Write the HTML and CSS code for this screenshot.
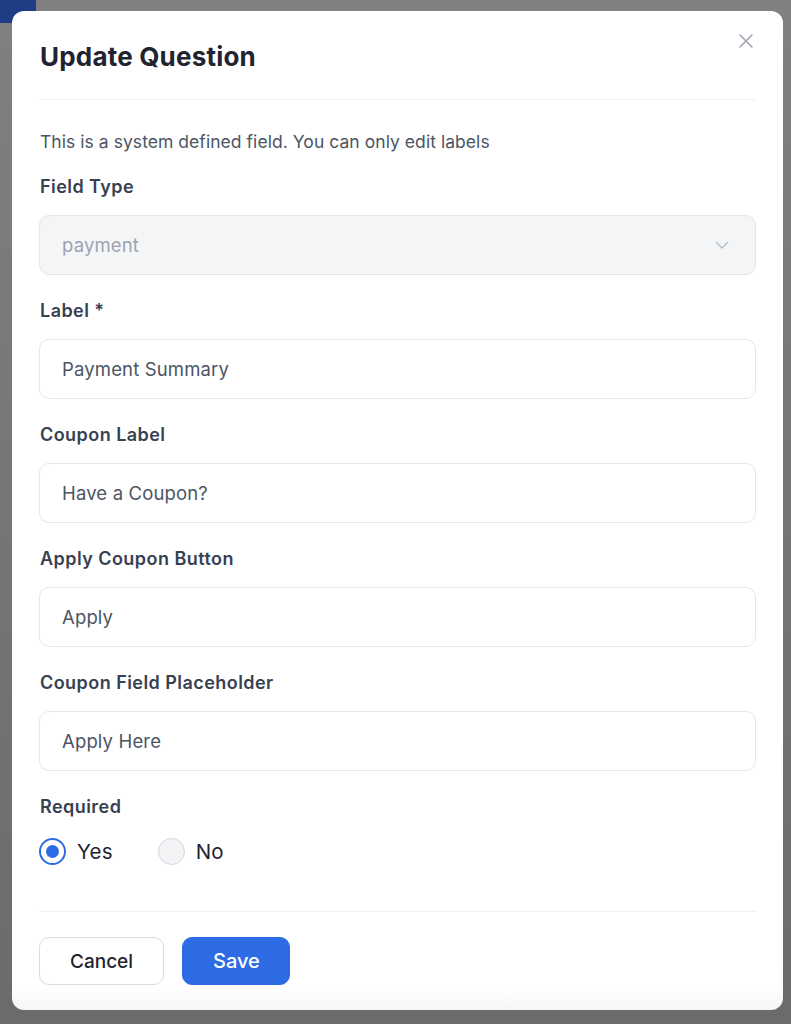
FILE: index.html
```html
<!DOCTYPE html>
<html lang="en">
<head>
<meta charset="utf-8">
<title>Update Question</title>
<link rel="stylesheet" href="styles.css">
</head>
<body>
<div class="backdrop">
  <div class="page-tab"></div>
  <div class="modal">
    <div class="modal-header">
      <h2 class="modal-title">Update Question</h2>
      <button class="close-btn" aria-label="Close">
        <svg viewBox="0 0 18 18" width="18" height="18"><path d="M3 3 L15 15 M15 3 L3 15" stroke="#9ca3af" stroke-width="1.5" stroke-linecap="round" fill="none"/></svg>
      </button>
    </div>
    <div class="modal-body">
      <p class="note">This is a system defined field. You can only edit labels</p>
      <div class="group">
        <label class="label">Field Type</label>
        <div class="select">
          <span class="select-text">payment</span>
          <svg viewBox="0 0 16 16" width="16" height="16"><path d="M2.5 5.5 L8 11 L13.5 5.5" stroke="#b5bac2" stroke-width="1.4" fill="none" stroke-linecap="round" stroke-linejoin="round"/></svg>
        </div>
      </div>
      <div class="group">
        <label class="label">Label *</label>
        <div class="input">Payment Summary</div>
      </div>
      <div class="group">
        <label class="label">Coupon Label</label>
        <div class="input">Have a Coupon?</div>
      </div>
      <div class="group">
        <label class="label">Apply Coupon Button</label>
        <div class="input">Apply</div>
      </div>
      <div class="group">
        <label class="label">Coupon Field Placeholder</label>
        <div class="input">Apply Here</div>
      </div>
      <div class="group">
        <label class="label">Required</label>
        <div class="radios">
          <div class="radio-item">
            <span class="radio checked"><span class="dot"></span></span>
            <span class="radio-text">Yes</span>
          </div>
          <div class="radio-item">
            <span class="radio"></span>
            <span class="radio-text">No</span>
          </div>
        </div>
      </div>
    </div>
    <div class="modal-footer">
      <button class="btn btn-cancel">Cancel</button>
      <button class="btn btn-save">Save</button>
    </div>
  </div>
</div>
</body>
</html>
```
FILE: styles.css
```css
* { box-sizing: border-box; }
html, body { margin: 0; padding: 0; }
body {
  font-family: Inter, "Noto Sans", "Liberation Sans", sans-serif;
  background: linear-gradient(#808080, #6b6b6b);
  width: 791px;
  height: 1024px;
  overflow: hidden;
}
.backdrop {
  position: relative;
  padding: 11px 8px 14px 12px;
  height: 1024px;
}
.page-tab {
  position: absolute;
  left: 0;
  top: 0;
  width: 36px;
  height: 23px;
  background: #1e3d84;
}
.modal {
  position: relative;
  width: 771px;
  height: 999px;
  border-radius: 12px;
  padding: 0 27px;
  display: flex;
  flex-direction: column;
  background: linear-gradient(#ffffff 975px, #f6f6f6 999px);
}
.modal-header {
  display: flex;
  justify-content: space-between;
  align-items: flex-start;
  padding: 28px 0 24px 1px;
  border-bottom: 1px solid #f0f0f2;
}
.modal-title {
  margin: 0;
  font-size: 26px;
  line-height: 36px;
  font-weight: 700;
  color: #1f2430;
  letter-spacing: 0.2px;
}
.close-btn {
  border: 0;
  background: none;
  padding: 0;
  width: 18px;
  height: 18px;
  margin-top: -7px;
  margin-right: 1px;
  display: flex;
}
.modal-body {
  padding-top: 30px;
  display: flex;
  flex-direction: column;
  gap: 24px;
}
.note {
  margin: 0 0 -3px 1px;
  font-size: 17.5px;
  line-height: 24px;
  color: #4b5563;
  letter-spacing: 0.05px;
}
.group {
  display: flex;
  flex-direction: column;
  gap: 16px;
}
.label {
  font-size: 18px;
  line-height: 24px;
  font-weight: 600;
  color: #374151;
  margin-left: 1px;
  letter-spacing: 0.45px;
}
.select, .input {
  height: 60px;
  border: 1px solid #e4e6ea;
  border-radius: 10px;
  padding: 0 22px;
  display: flex;
  align-items: center;
  font-size: 18.5px;
  color: #4b5563;
  letter-spacing: 0.15px;
}
.select {
  background: #f4f5f7;
  justify-content: space-between;
  padding-right: 25px;
}
.select-text { color: #9ca3af; }
.radios {
  display: flex;
  align-items: center;
  gap: 45px;
  height: 28px;
  margin-top: 2px;
}
.radio-item {
  display: flex;
  align-items: center;
  gap: 11px;
}
.radio {
  width: 27px;
  height: 27px;
  border-radius: 50%;
  border: 1.5px solid #d1d5db;
  background: #f3f4f6;
  display: flex;
  align-items: center;
  justify-content: center;
}
.radio.checked {
  border: 2px solid #2d6be4;
  background: #fff;
}
.dot {
  width: 13px;
  height: 13px;
  border-radius: 50%;
  background: #2d6be4;
}
.radio-text {
  font-size: 20.5px;
  color: #1f2430;
  letter-spacing: 0.2px;
}
.modal-footer {
  margin-top: 46px;
  border-top: 1px solid #f0f0f2;
  padding-top: 25px;
  display: flex;
  gap: 18px;
}
.btn {
  height: 48px;
  border-radius: 10px;
  font-family: inherit;
  font-size: 19px;
  font-weight: 500;
  padding: 0 30px;
  cursor: pointer;
}
.btn-cancel {
  width: 125px;
  background: #fff;
  border: 1px solid #d9dce1;
  color: #1f2430;
}
.btn-save {
  width: 108px;
  background: #2d6be4;
  border: 1px solid #2d6be4;
  color: #fff;
  font-size: 20px;
}
```
